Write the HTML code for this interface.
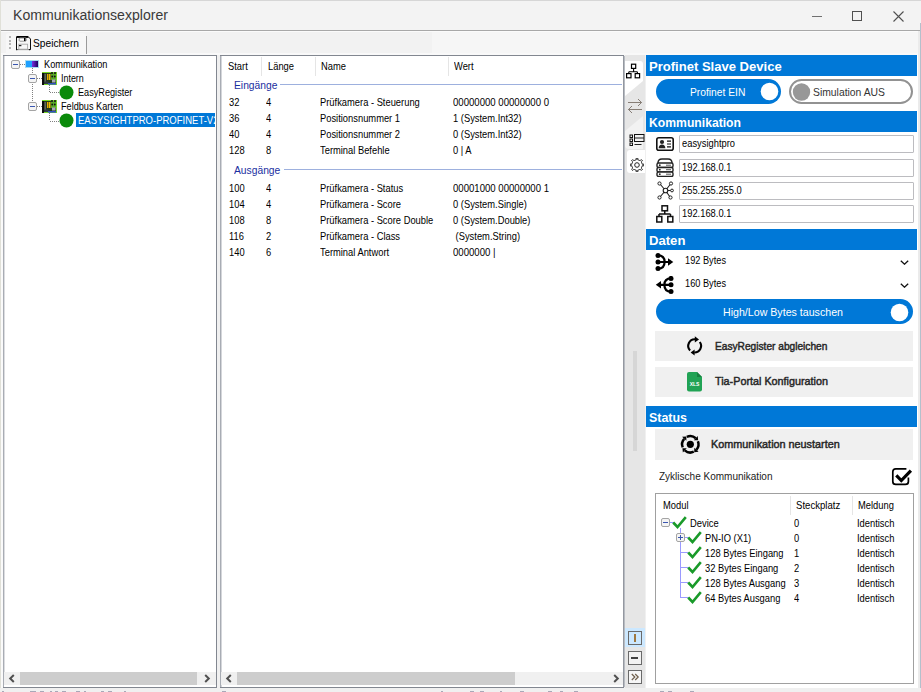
<!DOCTYPE html><html><head><meta charset="utf-8"><style>
*{margin:0;padding:0;box-sizing:border-box}
html,body{width:921px;height:692px;overflow:hidden;background:#f0f0f0;position:relative;font-family:"Liberation Sans",sans-serif}
.r{position:absolute;display:block}
.t{position:absolute;white-space:nowrap;transform-origin:0 0;color:#000}
.ms{font-size:11px;line-height:11px;transform:scaleX(0.85)}
.seg{font-size:11px;line-height:11px;transform:scaleX(0.92)}
.sb{font-size:11px;line-height:11px;-webkit-text-stroke:0.45px #2a2a2a;transform:scaleX(0.93)}
.hdr{font-size:13px;line-height:13px;font-weight:bold;color:#fff;transform:scaleX(0.97)}
.title{font-size:14px;line-height:14px;color:#3a3a3a}
</style></head><body><div class="r" style="left:0px;top:0px;width:921px;height:31px;background:#f3f3f3;"></div>
<div class="r" style="left:0px;top:0px;width:921px;height:1px;background:#d6d6d6;"></div>
<div class="r" style="left:0px;top:0px;width:1px;height:692px;background:#e0e0d8;"></div>
<div class="r" style="left:1px;top:31px;width:2px;height:661px;background:#fafafa;"></div>
<div class="r" style="left:1px;top:30px;width:920px;height:1px;background:#a8a8a8;"></div>
<div class="t title" style="left:13px;top:8px;transform:scaleX(1.0060);">Kommunikationsexplorer</div>
<div class="r" style="left:812px;top:16px;width:10px;height:1px;background:#707070;"></div>
<div class="r" style="left:852px;top:11px;width:10px;height:10px;background:transparent;border:1px solid #505050"></div>
<svg class="r" style="left:893px;top:11px;" width="11" height="11" viewBox="0 0 11 11"><path d="M0.5 0.5L10.5 10.5M10.5 0.5L0.5 10.5" stroke="#505050" stroke-width="1.1"/></svg>
<div class="r" style="left:918px;top:31px;width:3px;height:661px;background:#ebebeb;"></div>
<div class="r" style="left:920px;top:23px;width:1px;height:669px;background:#b4c0cc;"></div>
<div class="r" style="left:1px;top:31px;width:917px;height:24px;background:#f2f2f2;"></div>
<div class="r" style="left:432px;top:31px;width:486px;height:24px;background:#f6f6f6;"></div>
<div class="r" style="left:1px;top:31px;width:917px;height:1px;background:#fbfbfb;"></div>
<div class="r" style="left:1px;top:53px;width:917px;height:2px;background:#f9f9f9;"></div>
<div class="r" style="left:6px;top:33px;width:80px;height:21px;background:#f7f7f7;border-radius:3px 3px 0 0"></div>
<div class="r" style="left:86px;top:36px;width:1px;height:18px;background:#9a9a9a;"></div>
<div class="r" style="left:9px;top:36px;width:2px;height:2px;background:#b4b4b4;"></div>
<div class="r" style="left:9px;top:40px;width:2px;height:2px;background:#b4b4b4;"></div>
<div class="r" style="left:9px;top:43px;width:2px;height:2px;background:#b4b4b4;"></div>
<div class="r" style="left:9px;top:47px;width:2px;height:2px;background:#b4b4b4;"></div>
<svg class="r" style="left:16px;top:36px;" width="15" height="15" viewBox="0 0 15 15"><path d="M0.5 13.8V1H12.5L14.5 3V13.8" fill="none" stroke="#111" stroke-width="1"/><path d="M0.5 0.9H12.3" stroke="#000" stroke-width="1.8"/><path d="M0.5 13.6H14" stroke="#777" stroke-width="1"/><rect x="0" y="13" width="1.2" height="1.2" fill="#111"/><rect x="13" y="13" width="1.2" height="1.2" fill="#111"/><rect x="3.2" y="2" width="7" height="3.2" rx="0.8" fill="#fff" stroke="#888" stroke-width="0.9"/><rect x="8" y="2" width="1.5" height="3" fill="#000"/><rect x="2.8" y="8.2" width="8.8" height="5" fill="#f8f8f8" stroke="#aaa" stroke-width="0.9"/><rect x="3" y="9" width="2.4" height="1.2" fill="#222"/></svg>
<div class="t seg" style="left:33px;top:38px;transform:scaleX(0.9284);">Speichern</div>
<div class="r" style="left:3px;top:55px;width:214px;height:633px;background:#fff;border:1px solid #828790"></div>
<div class="r" style="left:3px;top:56px;width:1px;height:631px;background:#a8acb4;"></div>
<div class="r" style="left:4px;top:56px;width:1px;height:616px;background:#dcdde0;"></div>
<div class="r" style="left:4px;top:672px;width:212px;height:13px;background:#f0f0f0;"></div>
<div class="r" style="left:20px;top:672px;width:177px;height:13px;background:#cdcdcd;"></div>
<svg class="r" style="left:8px;top:674px;" width="8" height="9" viewBox="0 0 8 9"><path d="M5.8 1L2.2 4.5L5.8 8" fill="none" stroke="#505050" stroke-width="2"/></svg>
<svg class="r" style="left:203px;top:674px;" width="8" height="9" viewBox="0 0 8 9"><path d="M2.2 1L5.8 4.5L2.2 8" fill="none" stroke="#505050" stroke-width="2"/></svg>
<div class="r" style="left:20px;top:64px;width:1px;height:1px;background:#808080;"></div>
<div class="r" style="left:22px;top:64px;width:1px;height:1px;background:#808080;"></div>
<div class="r" style="left:24px;top:64px;width:1px;height:1px;background:#808080;"></div>
<div class="r" style="left:32px;top:68px;width:1px;height:1px;background:#808080;"></div>
<div class="r" style="left:32px;top:70px;width:1px;height:1px;background:#808080;"></div>
<div class="r" style="left:32px;top:72px;width:1px;height:1px;background:#808080;"></div>
<div class="r" style="left:32px;top:74px;width:1px;height:1px;background:#808080;"></div>
<div class="r" style="left:32px;top:76px;width:1px;height:1px;background:#808080;"></div>
<div class="r" style="left:32px;top:78px;width:1px;height:1px;background:#808080;"></div>
<div class="r" style="left:32px;top:80px;width:1px;height:1px;background:#808080;"></div>
<div class="r" style="left:32px;top:82px;width:1px;height:1px;background:#808080;"></div>
<div class="r" style="left:32px;top:84px;width:1px;height:1px;background:#808080;"></div>
<div class="r" style="left:32px;top:86px;width:1px;height:1px;background:#808080;"></div>
<div class="r" style="left:32px;top:88px;width:1px;height:1px;background:#808080;"></div>
<div class="r" style="left:32px;top:90px;width:1px;height:1px;background:#808080;"></div>
<div class="r" style="left:32px;top:92px;width:1px;height:1px;background:#808080;"></div>
<div class="r" style="left:32px;top:94px;width:1px;height:1px;background:#808080;"></div>
<div class="r" style="left:32px;top:96px;width:1px;height:1px;background:#808080;"></div>
<div class="r" style="left:32px;top:98px;width:1px;height:1px;background:#808080;"></div>
<div class="r" style="left:32px;top:100px;width:1px;height:1px;background:#808080;"></div>
<div class="r" style="left:37px;top:78px;width:1px;height:1px;background:#808080;"></div>
<div class="r" style="left:39px;top:78px;width:1px;height:1px;background:#808080;"></div>
<div class="r" style="left:41px;top:78px;width:1px;height:1px;background:#808080;"></div>
<div class="r" style="left:37px;top:106px;width:1px;height:1px;background:#808080;"></div>
<div class="r" style="left:39px;top:106px;width:1px;height:1px;background:#808080;"></div>
<div class="r" style="left:41px;top:106px;width:1px;height:1px;background:#808080;"></div>
<div class="r" style="left:49px;top:85px;width:1px;height:1px;background:#808080;"></div>
<div class="r" style="left:49px;top:87px;width:1px;height:1px;background:#808080;"></div>
<div class="r" style="left:49px;top:89px;width:1px;height:1px;background:#808080;"></div>
<div class="r" style="left:49px;top:91px;width:1px;height:1px;background:#808080;"></div>
<div class="r" style="left:50px;top:92px;width:1px;height:1px;background:#808080;"></div>
<div class="r" style="left:52px;top:92px;width:1px;height:1px;background:#808080;"></div>
<div class="r" style="left:54px;top:92px;width:1px;height:1px;background:#808080;"></div>
<div class="r" style="left:56px;top:92px;width:1px;height:1px;background:#808080;"></div>
<div class="r" style="left:58px;top:92px;width:1px;height:1px;background:#808080;"></div>
<div class="r" style="left:49px;top:113px;width:1px;height:1px;background:#808080;"></div>
<div class="r" style="left:49px;top:115px;width:1px;height:1px;background:#808080;"></div>
<div class="r" style="left:49px;top:117px;width:1px;height:1px;background:#808080;"></div>
<div class="r" style="left:49px;top:119px;width:1px;height:1px;background:#808080;"></div>
<div class="r" style="left:50px;top:121px;width:1px;height:1px;background:#808080;"></div>
<div class="r" style="left:52px;top:121px;width:1px;height:1px;background:#808080;"></div>
<div class="r" style="left:54px;top:121px;width:1px;height:1px;background:#808080;"></div>
<div class="r" style="left:56px;top:121px;width:1px;height:1px;background:#808080;"></div>
<div class="r" style="left:58px;top:121px;width:1px;height:1px;background:#808080;"></div>
<svg class="r" style="left:11px;top:60px;" width="9" height="9" viewBox="0 0 9 9"><rect x="0.5" y="0.5" width="8" height="8" fill="#f4f4f4" stroke="#a4a4a4" rx="1.5"/><rect x="2" y="4" width="5" height="1" fill="#3a56b0"/></svg>
<svg class="r" style="left:25px;top:60px;" width="14" height="8" viewBox="0 0 14 8"><defs><linearGradient id="g1" x1="0" x2="1"><stop offset="0" stop-color="#7a30e0"/><stop offset="1" stop-color="#1c0060"/></linearGradient></defs><rect x="0" y="0" width="14" height="8" fill="#a8dcf0"/><rect x="1" y="1" width="6" height="6" fill="#1ea0ff"/><rect x="7" y="1" width="6" height="6" fill="url(#g1)"/></svg>
<div class="t ms" style="left:44px;top:59px;transform:scaleX(0.8361);">Kommunikation</div>
<svg class="r" style="left:28px;top:74px;" width="9" height="9" viewBox="0 0 9 9"><rect x="0.5" y="0.5" width="8" height="8" fill="#f4f4f4" stroke="#a4a4a4" rx="1.5"/><rect x="2" y="4" width="5" height="1" fill="#3a56b0"/></svg>
<svg class="r" style="left:42px;top:72px;" width="15" height="13" viewBox="0 0 15 13"><rect x="0" y="0" width="15" height="13" fill="#78d828"/><rect x="1" y="1" width="13" height="11" fill="#243c18"/><rect x="0" y="1" width="2" height="12" fill="#0c0c0c"/><rect x="2.5" y="2" width="1.5" height="8" fill="#606060"/><rect x="5" y="2" width="1.5" height="6" fill="#e8a800"/><rect x="7" y="2" width="1.5" height="6" fill="#f0c000"/><rect x="9" y="1" width="5" height="7" fill="#58a828"/><circle cx="10" cy="1" r="1" fill="#111"/><circle cx="13" cy="1" r="1" fill="#111"/><circle cx="10.2" cy="4.5" r="0.9" fill="#111"/><circle cx="12.8" cy="4.5" r="0.9" fill="#111"/><rect x="10" y="7.5" width="3.5" height="3" fill="#a8a8b8"/><rect x="2.5" y="9.5" width="4" height="2.5" fill="#303848"/><rect x="6" y="11" width="8" height="1.6" fill="#3050c0"/></svg>
<div class="t ms" style="left:61px;top:73px;transform:scaleX(0.8102);">Intern</div>
<svg class="r" style="left:59px;top:85px;" width="15" height="15" viewBox="0 0 15 15"><circle cx="7.5" cy="7.5" r="7" fill="#0a8a0a"/></svg>
<div class="t ms" style="left:78px;top:87px;transform:scaleX(0.8315);">EasyRegister</div>
<svg class="r" style="left:28px;top:102px;" width="9" height="9" viewBox="0 0 9 9"><rect x="0.5" y="0.5" width="8" height="8" fill="#f4f4f4" stroke="#a4a4a4" rx="1.5"/><rect x="2" y="4" width="5" height="1" fill="#3a56b0"/></svg>
<svg class="r" style="left:42px;top:100px;" width="15" height="13" viewBox="0 0 15 13"><rect x="0" y="0" width="15" height="13" fill="#78d828"/><rect x="1" y="1" width="13" height="11" fill="#243c18"/><rect x="0" y="1" width="2" height="12" fill="#0c0c0c"/><rect x="2.5" y="2" width="1.5" height="8" fill="#606060"/><rect x="5" y="2" width="1.5" height="6" fill="#e8a800"/><rect x="7" y="2" width="1.5" height="6" fill="#f0c000"/><rect x="9" y="1" width="5" height="7" fill="#58a828"/><circle cx="10" cy="1" r="1" fill="#111"/><circle cx="13" cy="1" r="1" fill="#111"/><circle cx="10.2" cy="4.5" r="0.9" fill="#111"/><circle cx="12.8" cy="4.5" r="0.9" fill="#111"/><rect x="10" y="7.5" width="3.5" height="3" fill="#a8a8b8"/><rect x="2.5" y="9.5" width="4" height="2.5" fill="#303848"/><rect x="6" y="11" width="8" height="1.6" fill="#3050c0"/></svg>
<div class="t ms" style="left:61px;top:101px;transform:scaleX(0.8310);">Feldbus Karten</div>
<svg class="r" style="left:59px;top:113px;" width="15" height="15" viewBox="0 0 15 15"><circle cx="7.5" cy="7.5" r="7" fill="#0a8a0a"/></svg>
<div class="r" style="left:76px;top:113px;width:139px;height:14px;background:#0078d7;overflow:hidden">
<div class="t ms" style="left:1.5px;top:2px;color:#fff;transform:scaleX(0.8641);">EASYSIGHTPRO-PROFINET-V2</div>
</div>
<div class="r" style="left:220px;top:55px;width:404px;height:633px;background:#fff;border:1px solid #828790"></div>
<div class="r" style="left:220px;top:56px;width:1px;height:631px;background:#a8acb4;"></div>
<div class="r" style="left:221px;top:56px;width:1px;height:631px;background:#d4d6da;"></div>
<div class="r" style="left:623px;top:56px;width:1px;height:631px;background:#9498a0;"></div>
<div class="r" style="left:624px;top:56px;width:1px;height:631px;background:#b8bcc2;"></div>
<div class="t ms" style="left:228px;top:61px;">Start</div>
<div class="t ms" style="left:268px;top:61px;">Länge</div>
<div class="t ms" style="left:321px;top:61px;">Name</div>
<div class="t ms" style="left:454px;top:61px;">Wert</div>
<div class="r" style="left:261px;top:57px;width:1px;height:19px;background:#e5e5e5;"></div>
<div class="r" style="left:315px;top:57px;width:1px;height:19px;background:#e5e5e5;"></div>
<div class="r" style="left:448px;top:57px;width:1px;height:19px;background:#e5e5e5;"></div>
<div class="t seg" style="left:234px;top:80px;color:#1a2ea0;transform:scaleX(0.9333);">Eingänge</div>
<div class="r" style="left:280px;top:84px;width:342px;height:1px;background:#9db0de;"></div>
<div class="t seg" style="left:234px;top:165px;color:#1a2ea0;transform:scaleX(0.9345);">Ausgänge</div>
<div class="r" style="left:284px;top:169px;width:338px;height:1px;background:#9db0de;"></div>
<div class="t ms" style="left:229px;top:97px;">32</div>
<div class="t ms" style="left:266px;top:97px;">4</div>
<div class="t ms" style="left:320px;top:97px;">Prüfkamera - Steuerung</div>
<div class="t ms" style="left:453px;top:97px;transform:scaleX(0.872);">00000000 00000000 0</div>
<div class="t ms" style="left:229px;top:113px;">36</div>
<div class="t ms" style="left:266px;top:113px;">4</div>
<div class="t ms" style="left:320px;top:113px;">Positionsnummer 1</div>
<div class="t ms" style="left:453px;top:113px;">1 (System.Int32)</div>
<div class="t ms" style="left:229px;top:129px;">40</div>
<div class="t ms" style="left:266px;top:129px;">4</div>
<div class="t ms" style="left:320px;top:129px;">Positionsnummer 2</div>
<div class="t ms" style="left:453px;top:129px;">0 (System.Int32)</div>
<div class="t ms" style="left:229px;top:145px;">128</div>
<div class="t ms" style="left:266px;top:145px;">8</div>
<div class="t ms" style="left:320px;top:145px;">Terminal Befehle</div>
<div class="t ms" style="left:453px;top:145px;">0 | A</div>
<div class="t ms" style="left:229px;top:183px;">100</div>
<div class="t ms" style="left:266px;top:183px;">4</div>
<div class="t ms" style="left:320px;top:183px;">Prüfkamera - Status</div>
<div class="t ms" style="left:453px;top:183px;transform:scaleX(0.872);">00001000 00000000 1</div>
<div class="t ms" style="left:229px;top:199px;">104</div>
<div class="t ms" style="left:266px;top:199px;">4</div>
<div class="t ms" style="left:320px;top:199px;">Prüfkamera - Score</div>
<div class="t ms" style="left:453px;top:199px;">0 (System.Single)</div>
<div class="t ms" style="left:229px;top:215px;">108</div>
<div class="t ms" style="left:266px;top:215px;">8</div>
<div class="t ms" style="left:320px;top:215px;">Prüfkamera - Score Double</div>
<div class="t ms" style="left:453px;top:215px;">0 (System.Double)</div>
<div class="t ms" style="left:229px;top:231px;">116</div>
<div class="t ms" style="left:266px;top:231px;">2</div>
<div class="t ms" style="left:320px;top:231px;">Prüfkamera - Class</div>
<div class="t ms" style="left:453px;top:231px;">&nbsp;(System.String)</div>
<div class="t ms" style="left:229px;top:247px;">140</div>
<div class="t ms" style="left:266px;top:247px;">6</div>
<div class="t ms" style="left:320px;top:247px;">Terminal Antwort</div>
<div class="t ms" style="left:453px;top:247px;transform:scaleX(0.872);">0000000 |</div>
<div class="r" style="left:221px;top:672px;width:402px;height:13px;background:#f0f0f0;"></div>
<div class="r" style="left:237px;top:672px;width:278px;height:13px;background:#cdcdcd;"></div>
<svg class="r" style="left:225px;top:674px;" width="8" height="9" viewBox="0 0 8 9"><path d="M5.8 1L2.2 4.5L5.8 8" fill="none" stroke="#505050" stroke-width="2"/></svg>
<svg class="r" style="left:612px;top:674px;" width="8" height="9" viewBox="0 0 8 9"><path d="M2.2 1L5.8 4.5L2.2 8" fill="none" stroke="#505050" stroke-width="2"/></svg>
<div class="r" style="left:625px;top:55px;width:20px;height:633px;background:#e6e6e6;"></div>
<div class="r" style="left:633px;top:351px;width:4px;height:100px;background:#d6d6d6;"></div>
<svg class="r" style="left:624px;top:61px;" width="20" height="36" viewBox="0 0 20 36"><path d="M1 0H16Q19 0 19 3V20L1 35Z" fill="#fff"/></svg>
<svg class="r" style="left:625px;top:63px;" width="17" height="16" viewBox="0 0 17 16"><rect x="6.5" y="1.2" width="4.2" height="4.2" fill="none" stroke="#000" stroke-width="1.2"/><path d="M8.6 5.4V8.8M3.8 8.8H12.4M3.8 8.8V10.5M12.4 8.8V10.5" stroke="#000" stroke-width="1.1" fill="none"/><rect x="1.6" y="10.6" width="4.4" height="4.2" fill="none" stroke="#000" stroke-width="1.2"/><rect x="10.2" y="10.6" width="4.4" height="4.2" fill="none" stroke="#000" stroke-width="1.2"/></svg>
<svg class="r" style="left:627px;top:97px;" width="16" height="16" viewBox="0 0 16 16"><path d="M1 5.5H14.5M11 2L14.5 5.5L11 9M15 12.5H1.5M5 9L1.5 12.5L5 16" fill="none" stroke="#7a7068" stroke-width="0.9"/></svg>
<svg class="r" style="left:624px;top:116px;" width="20" height="35" viewBox="0 0 20 35"><path d="M19 0V33H5Q1 33 1 29V15Z" fill="#f2f2f2"/></svg>
<svg class="r" style="left:629px;top:134px;" width="16" height="12" viewBox="0 0 16 12"><rect x="1" y="1" width="2.5" height="2.5" fill="none" stroke="#111" stroke-width="1"/><rect x="1" y="5" width="2.5" height="2.5" fill="none" stroke="#111" stroke-width="1"/><rect x="1" y="9" width="2.5" height="2.5" fill="none" stroke="#111" stroke-width="1"/><rect x="5.5" y="0.5" width="9.5" height="7" fill="none" stroke="#111" stroke-width="1"/><path d="M5.5 4H15M5.5 10.5H12.5" stroke="#222" stroke-width="1"/></svg>
<svg class="r" style="left:624px;top:150px;" width="22" height="24" viewBox="0 0 22 24"><path d="M6 0H21V23H6Q3 23 3 20V3Q3 0 6 0Z" fill="#fff"/></svg>
<svg class="r" style="left:630px;top:157.5px;" width="14" height="14" viewBox="0 0 14 14"><path d="M11.93 5.35L12.14 6.19L13.85 6.16L13.85 7.84L12.14 7.81L11.93 8.65L11.65 9.32L11.21 10.06L12.44 11.25L11.25 12.44L10.06 11.21L9.32 11.65L8.65 11.93L7.81 12.14L7.84 13.85L6.16 13.85L6.19 12.14L5.35 11.93L4.68 11.65L3.94 11.21L2.75 12.44L1.56 11.25L2.79 10.06L2.35 9.32L2.07 8.65L1.86 7.81L0.15 7.84L0.15 6.16L1.86 6.19L2.07 5.35L2.35 4.68L2.79 3.94L1.56 2.75L2.75 1.56L3.94 2.79L4.68 2.35L5.35 2.07L6.19 1.86L6.16 0.15L7.84 0.15L7.81 1.86L8.65 2.07L9.32 2.35L10.06 2.79L11.25 1.56L12.44 2.75L11.21 3.94L11.65 4.68Z" fill="none" stroke="#222" stroke-width="1"/><circle cx="7" cy="7" r="2.3" fill="none" stroke="#222" stroke-width="1"/></svg>
<div class="r" style="left:625px;top:628px;width:20px;height:19px;background:#cce8ff;"></div>
<div class="r" style="left:628px;top:631px;width:14px;height:14px;background:#cce8ff;border:1px solid #6a6a6a"></div>
<div class="r" style="left:634px;top:634px;width:1.5px;height:8px;background:#a07840;"></div>
<div class="r" style="left:628px;top:651px;width:14px;height:14px;background:#f2f2f2;border:1px solid #6a6a6a"></div>
<div class="r" style="left:631px;top:657px;width:7px;height:2px;background:#404040;"></div>
<div class="r" style="left:628px;top:670px;width:14px;height:14px;background:#f6f6f6;border:1px solid #6a6a6a"></div>
<svg class="r" style="left:630px;top:672px;" width="10" height="10" viewBox="0 0 10 10"><path d="M1.8 2L4.8 5L1.8 8M5.2 2L8.2 5L5.2 8" fill="none" stroke="#70604c" stroke-width="1.2"/></svg>
<div class="r" style="left:645px;top:55px;width:273px;height:633px;background:#fff;"></div>
<div class="r" style="left:645px;top:55px;width:1px;height:633px;background:#f0f0f0;"></div>
<div class="r" style="left:646px;top:55px;width:271px;height:21px;background:#0078d7;"></div>
<div class="t hdr" style="left:649px;top:60px;transform:scaleX(1.0035);">Profinet Slave Device</div>
<div class="r" style="left:656px;top:79px;width:125px;height:25px;background:#0078d7;border-radius:12.5px"></div>
<div class="t seg" style="left:690px;top:87px;color:#fff;transform:scaleX(0.9340);">Profinet EIN</div>
<svg class="r" style="left:760px;top:82px;" width="19" height="19" viewBox="0 0 19 19"><circle cx="9.5" cy="9.5" r="8.8" fill="#fff"/></svg>
<div class="r" style="left:789px;top:79px;width:124px;height:25px;background:#fff;border-radius:12.5px;border:2px solid #929292"></div>
<svg class="r" style="left:792px;top:83px;" width="19" height="19" viewBox="0 0 19 19"><circle cx="9.5" cy="9" r="8.7" fill="#989898"/></svg>
<div class="t seg" style="left:813px;top:87px;color:#333;transform:scaleX(0.9419);">Simulation AUS</div>
<div class="r" style="left:646px;top:111px;width:271px;height:21px;background:#0078d7;"></div>
<div class="t hdr" style="left:649px;top:116px;transform:scaleX(0.9365);">Kommunikation</div>
<div class="r" style="left:679px;top:135px;width:235px;height:18px;background:#fff;border:1px solid #bcbcc0;border-radius:1px"></div>
<div class="t ms" style="left:682px;top:138px;">easysightpro</div>
<div class="r" style="left:679px;top:159px;width:235px;height:18px;background:#fff;border:1px solid #bcbcc0;border-radius:1px"></div>
<div class="t ms" style="left:682px;top:162px;">192.168.0.1</div>
<div class="r" style="left:679px;top:182px;width:235px;height:18px;background:#fff;border:1px solid #bcbcc0;border-radius:1px"></div>
<div class="t ms" style="left:682px;top:185px;">255.255.255.0</div>
<div class="r" style="left:679px;top:205px;width:235px;height:18px;background:#fff;border:1px solid #bcbcc0;border-radius:1px"></div>
<div class="t ms" style="left:682px;top:208px;">192.168.0.1</div>
<svg class="r" style="left:656px;top:137px;" width="18" height="14" viewBox="0 0 18 14"><rect x="0.8" y="0.8" width="16.4" height="12.4" rx="2" fill="none" stroke="#111" stroke-width="1.6"/><circle cx="6" cy="5" r="2.1" fill="#222"/><path d="M2.6 11.2Q3 7.6 6 7.6Q9 7.6 9.4 11.2Z" fill="#222"/><path d="M11 4.2H15M11 7H15M11 9.8H15" stroke="#111" stroke-width="1.2"/></svg>
<svg class="r" style="left:656px;top:158px;" width="18" height="19" viewBox="0 0 18 19"><path d="M2 5Q2 1 6 1H12Q16 1 16 5" fill="none" stroke="#222" stroke-width="1.4"/><rect x="1" y="5" width="16" height="4.5" rx="1.5" fill="#fff" stroke="#222" stroke-width="1.4"/><rect x="1" y="9.5" width="16" height="4.5" rx="1.5" fill="#fff" stroke="#222" stroke-width="1.4"/><rect x="1" y="14" width="16" height="4.5" rx="1.5" fill="#fff" stroke="#222" stroke-width="1.4"/><circle cx="3.8" cy="7.2" r="0.9" fill="#222"/><circle cx="3.8" cy="11.7" r="0.9" fill="#222"/><circle cx="3.8" cy="16.2" r="0.9" fill="#222"/><path d="M10 7.2H15M10 11.7H15M10 16.2H15" stroke="#555" stroke-width="1"/></svg>
<svg class="r" style="left:657px;top:181px;" width="17" height="19" viewBox="0 0 17 19"><path d="M8.5 9.5L3 3M8.5 9.5L13.5 3M8.5 9.5L3 16M8.5 9.5L13 16M8.5 9.5H14.5" stroke="#222" stroke-width="1.1"/><circle cx="8.5" cy="9.5" r="2.3" fill="#fff" stroke="#222" stroke-width="1.1"/><circle cx="2.5" cy="2.5" r="1.6" fill="#fff" stroke="#222"/><circle cx="14" cy="2.5" r="1.6" fill="#fff" stroke="#222"/><circle cx="2.5" cy="16.5" r="1.6" fill="#fff" stroke="#222"/><circle cx="13.5" cy="16.5" r="1.6" fill="#fff" stroke="#222"/><circle cx="15" cy="9.5" r="1.4" fill="#fff" stroke="#222"/></svg>
<svg class="r" style="left:656px;top:205px;" width="18" height="18" viewBox="0 0 18 18"><rect x="6" y="0.8" width="5.5" height="5" fill="none" stroke="#111" stroke-width="1.5"/><path d="M8.75 5.8V9M3 9H14.5M3 9V11.5M14.5 9V11.5" stroke="#111" stroke-width="1.5" fill="none"/><rect x="0.8" y="11.5" width="5" height="5.5" fill="none" stroke="#111" stroke-width="1.5"/><rect x="11.8" y="11.5" width="5" height="5.5" fill="none" stroke="#111" stroke-width="1.5"/></svg>
<div class="r" style="left:646px;top:229px;width:271px;height:21px;background:#0078d7;"></div>
<div class="t hdr" style="left:649px;top:234px;transform:scaleX(1.0076);">Daten</div>
<svg class="r" style="left:655px;top:253px;" width="19" height="18" viewBox="0 0 19 18"><path d="M3 2.4Q9.6 2.4 9.6 9Q9.6 15.6 3 15.6M3 9H14" fill="none" stroke="#000" stroke-width="2.2"/><circle cx="3" cy="2.6" r="2.5"/><circle cx="3" cy="9" r="2.5"/><circle cx="3" cy="15.4" r="2.5"/><path d="M13 5.3L18.3 9L13 12.7Z"/></svg>
<div class="t ms" style="left:685px;top:255px;transform:scaleX(0.8381);">192 Bytes</div>
<svg class="r" style="left:900px;top:260px;" width="9" height="5" viewBox="0 0 9 5"><path d="M0.8 0.8L4.5 4.2L8.2 0.8" fill="none" stroke="#111" stroke-width="1.3"/></svg>
<svg class="r" style="left:655px;top:276px;" width="19" height="18" viewBox="0 0 19 18"><path d="M16 2.4Q9.4 2.4 9.4 9Q9.4 15.6 16 15.6M16 8.8H5" fill="none" stroke="#000" stroke-width="2.2"/><circle cx="16" cy="2.4" r="2.5"/><circle cx="16" cy="8.8" r="2.5"/><circle cx="16" cy="15.4" r="2.5"/><path d="M6 5L0.8 8.8L6 12.6Z"/></svg>
<div class="t ms" style="left:685px;top:278px;transform:scaleX(0.8381);">160 Bytes</div>
<svg class="r" style="left:900px;top:283px;" width="9" height="5" viewBox="0 0 9 5"><path d="M0.8 0.8L4.5 4.2L8.2 0.8" fill="none" stroke="#111" stroke-width="1.3"/></svg>
<div class="r" style="left:656px;top:299px;width:257px;height:25px;background:#0078d7;border-radius:12.5px"></div>
<div class="t seg" style="left:723px;top:307px;color:#fff;transform:scaleX(0.9666);">High/Low Bytes tauschen</div>
<svg class="r" style="left:890px;top:303px;" width="19" height="19" viewBox="0 0 19 19"><circle cx="9.5" cy="9.5" r="8.8" fill="#fff"/></svg>
<div class="r" style="left:655px;top:331px;width:258px;height:30px;background:#f0f0f0;"></div>
<svg class="r" style="left:680px;top:332px;" width="30" height="30" viewBox="0 0 30 30"><path d="M10.1 18.5A6.6 6.6 0 0 1 15.5 7.35" fill="none" stroke="#000" stroke-width="2.1"/><path d="M19.8 10A6.6 6.6 0 0 1 14.3 20.5" fill="none" stroke="#000" stroke-width="2.1"/><path d="M14.8 4.2L19 7.4L14.8 10.4Z"/><path d="M14.6 17.4L10.6 20.5L14.6 23.4Z"/></svg>
<div class="t sb" style="left:715px;top:341px;color:#202020;transform:scaleX(0.9237);">EasyRegister abgleichen</div>
<div class="r" style="left:655px;top:367px;width:258px;height:30px;background:#f0f0f0;"></div>
<svg class="r" style="left:687px;top:372px;" width="15" height="20" viewBox="0 0 15 20"><path d="M2 0H10L15 5V17.5Q15 19.5 13 19.5H2Q0 19.5 0 17.5V2Q0 0 2 0Z" fill="#21a355"/><path d="M10 0V5H15Z" fill="#17803f"/><text x="7.5" y="14" font-size="5" font-weight="bold" fill="#fff" text-anchor="middle" font-family="Liberation Sans">XLS</text></svg>
<div class="t sb" style="left:715px;top:376px;color:#202020;transform:scaleX(0.9813);">Tia-Portal Konfiguration</div>
<div class="r" style="left:646px;top:406px;width:271px;height:21px;background:#0078d7;"></div>
<div class="t hdr" style="left:649px;top:411px;transform:scaleX(0.9564);">Status</div>
<div class="r" style="left:655px;top:429px;width:258px;height:31px;background:#f0f0f0;"></div>
<svg class="r" style="left:676px;top:430px;" width="30" height="30" viewBox="0 0 30 30"><path d="M10.83 6.87A8.2 8.2 0 0 1 19.79 8.21" fill="none" stroke="#000" stroke-width="2.5"/><path d="M21.73 6.05L22.16 10.35L17.85 10.36Z"/><path d="M21.90 11.23A8.2 8.2 0 0 1 20.39 19.79" fill="none" stroke="#000" stroke-width="2.5"/><path d="M22.55 21.73L18.25 22.16L18.24 17.85Z"/><path d="M17.77 21.73A8.2 8.2 0 0 1 8.81 20.39" fill="none" stroke="#000" stroke-width="2.5"/><path d="M6.87 22.55L6.44 18.25L10.75 18.24Z"/><path d="M6.70 17.37A8.2 8.2 0 0 1 8.21 8.81" fill="none" stroke="#000" stroke-width="2.5"/><path d="M6.05 6.87L10.35 6.44L10.36 10.75Z"/><circle cx="14.3" cy="14.3" r="3.6"/></svg>
<div class="t sb" style="left:711px;top:439px;color:#202020;transform:scaleX(0.9835);">Kommunikation neustarten</div>
<div class="t seg" style="left:659px;top:471px;color:#222;transform:scaleX(0.9100);">Zyklische Kommunikation</div>
<svg class="r" style="left:886px;top:462px;" width="30" height="30" viewBox="0 0 30 30"><path d="M20.4 6.8H9.8Q6.8 6.8 6.8 9.8V19.4Q6.8 22.4 9.8 22.4H19.4Q22.4 22.4 22.4 19.4V15.6" fill="none" stroke="#000" stroke-width="1.7"/><path d="M10.3 13.4L15.3 18.5L24.9 8.6" fill="none" stroke="#000" stroke-width="3.2"/></svg>
<div class="r" style="left:655px;top:493px;width:259px;height:191px;background:#fff;border:1px solid #a0a0a0"></div>
<div class="t ms" style="left:663px;top:500px;">Modul</div>
<div class="t ms" style="left:796px;top:500px;transform:scaleX(0.8709);">Steckplatz</div>
<div class="t ms" style="left:858px;top:500px;">Meldung</div>
<div class="r" style="left:790px;top:496px;width:1px;height:19px;background:#e5e5e5;"></div>
<div class="r" style="left:852px;top:496px;width:1px;height:19px;background:#e5e5e5;"></div>
<div class="r" style="left:669px;top:522px;width:5px;height:1px;background:#9a9aff;"></div>
<div class="r" style="left:680px;top:528px;width:1px;height:70px;background:#9a9aff;"></div>
<div class="r" style="left:684px;top:537px;width:4px;height:1px;background:#9a9aff;"></div>
<div class="r" style="left:680px;top:552px;width:8px;height:1px;background:#9a9aff;"></div>
<div class="r" style="left:680px;top:567px;width:8px;height:1px;background:#9a9aff;"></div>
<div class="r" style="left:680px;top:582px;width:8px;height:1px;background:#9a9aff;"></div>
<div class="r" style="left:680px;top:597px;width:8px;height:1px;background:#9a9aff;"></div>
<svg class="r" style="left:661px;top:518px;" width="9" height="9" viewBox="0 0 9 9"><rect x="0.5" y="0.5" width="8" height="8" fill="#f4f4f4" stroke="#a4a4a4" rx="1.5"/><rect x="2" y="4" width="5" height="1" fill="#3a56b0"/></svg>
<svg class="r" style="left:672px;top:516px;" width="15" height="13" viewBox="0 0 15 13"><path d="M1.2 6.5L5.5 11L13.8 1.2" fill="none" stroke="#1a9a2a" stroke-width="2.6"/></svg>
<div class="t ms" style="left:690px;top:518px;">Device</div>
<svg class="r" style="left:676px;top:533px;" width="9" height="9" viewBox="0 0 9 9"><rect x="0.5" y="0.5" width="8" height="8" fill="#f4f4f4" stroke="#a4a4a4" rx="1.5"/><rect x="2" y="4" width="5" height="1" fill="#3a56b0"/><rect x="4" y="2" width="1" height="5" fill="#3a56b0"/></svg>
<svg class="r" style="left:687px;top:531px;" width="15" height="13" viewBox="0 0 15 13"><path d="M1.2 6.5L5.5 11L13.8 1.2" fill="none" stroke="#1a9a2a" stroke-width="2.6"/></svg>
<div class="t ms" style="left:705px;top:533px;">PN-IO (X1)</div>
<svg class="r" style="left:687px;top:546px;" width="15" height="13" viewBox="0 0 15 13"><path d="M1.2 6.5L5.5 11L13.8 1.2" fill="none" stroke="#1a9a2a" stroke-width="2.6"/></svg>
<div class="t ms" style="left:705px;top:548px;">128 Bytes Eingang</div>
<svg class="r" style="left:687px;top:561px;" width="15" height="13" viewBox="0 0 15 13"><path d="M1.2 6.5L5.5 11L13.8 1.2" fill="none" stroke="#1a9a2a" stroke-width="2.6"/></svg>
<div class="t ms" style="left:705px;top:563px;">32 Bytes Eingang</div>
<svg class="r" style="left:687px;top:576px;" width="15" height="13" viewBox="0 0 15 13"><path d="M1.2 6.5L5.5 11L13.8 1.2" fill="none" stroke="#1a9a2a" stroke-width="2.6"/></svg>
<div class="t ms" style="left:705px;top:578px;">128 Bytes Ausgang</div>
<svg class="r" style="left:687px;top:591px;" width="15" height="13" viewBox="0 0 15 13"><path d="M1.2 6.5L5.5 11L13.8 1.2" fill="none" stroke="#1a9a2a" stroke-width="2.6"/></svg>
<div class="t ms" style="left:705px;top:593px;">64 Bytes Ausgang</div>
<div class="t ms" style="left:794px;top:518px;">0</div>
<div class="t ms" style="left:857px;top:518px;">Identisch</div>
<div class="t ms" style="left:794px;top:533px;">0</div>
<div class="t ms" style="left:857px;top:533px;">Identisch</div>
<div class="t ms" style="left:794px;top:548px;">1</div>
<div class="t ms" style="left:857px;top:548px;">Identisch</div>
<div class="t ms" style="left:794px;top:563px;">2</div>
<div class="t ms" style="left:857px;top:563px;">Identisch</div>
<div class="t ms" style="left:794px;top:578px;">3</div>
<div class="t ms" style="left:857px;top:578px;">Identisch</div>
<div class="t ms" style="left:794px;top:593px;">4</div>
<div class="t ms" style="left:857px;top:593px;">Identisch</div>
<div class="r" style="left:0px;top:688px;width:921px;height:4px;background:#f0f0f0;"></div>
<div class="r" style="left:2px;top:691px;width:2px;height:1px;background:#a8a8b8;"></div>
<div class="r" style="left:30px;top:691px;width:6px;height:1px;background:#a8a8b8;"></div>
<div class="r" style="left:40px;top:691px;width:4px;height:1px;background:#a8a8b8;"></div>
<div class="r" style="left:50px;top:691px;width:2px;height:1px;background:#a8a8b8;"></div>
<div class="r" style="left:55px;top:691px;width:3px;height:1px;background:#a8a8b8;"></div>
<div class="r" style="left:62px;top:691px;width:4px;height:1px;background:#a8a8b8;"></div>
<div class="r" style="left:76px;top:691px;width:4px;height:1px;background:#a8a8b8;"></div>
<div class="r" style="left:84px;top:691px;width:2px;height:1px;background:#a8a8b8;"></div>
<div class="r" style="left:101px;top:691px;width:3px;height:1px;background:#a8a8b8;"></div>
<div class="r" style="left:108px;top:691px;width:4px;height:1px;background:#a8a8b8;"></div>
<div class="r" style="left:124px;top:691px;width:2px;height:1px;background:#a8a8b8;"></div>
<div class="r" style="left:222px;top:691px;width:4px;height:1px;background:#a8a8b8;"></div>
<div class="r" style="left:441px;top:691px;width:2px;height:1px;background:#a8a8b8;"></div>
<div class="r" style="left:470px;top:691px;width:4px;height:1px;background:#a8a8b8;"></div>
<div class="r" style="left:480px;top:691px;width:4px;height:1px;background:#a8a8b8;"></div>
<div class="r" style="left:500px;top:691px;width:2px;height:1px;background:#a8a8b8;"></div>
<div class="r" style="left:520px;top:691px;width:4px;height:1px;background:#a8a8b8;"></div>
<div class="r" style="left:548px;top:691px;width:4px;height:1px;background:#a8a8b8;"></div>
<div class="r" style="left:560px;top:691px;width:3px;height:1px;background:#a8a8b8;"></div>
<div class="r" style="left:574px;top:691px;width:4px;height:1px;background:#a8a8b8;"></div>
<div class="r" style="left:660px;top:691px;width:4px;height:1px;background:#a8a8b8;"></div>
<div class="r" style="left:668px;top:691px;width:4px;height:1px;background:#a8a8b8;"></div>
<div class="r" style="left:690px;top:691px;width:4px;height:1px;background:#a8a8b8;"></div></body></html>
